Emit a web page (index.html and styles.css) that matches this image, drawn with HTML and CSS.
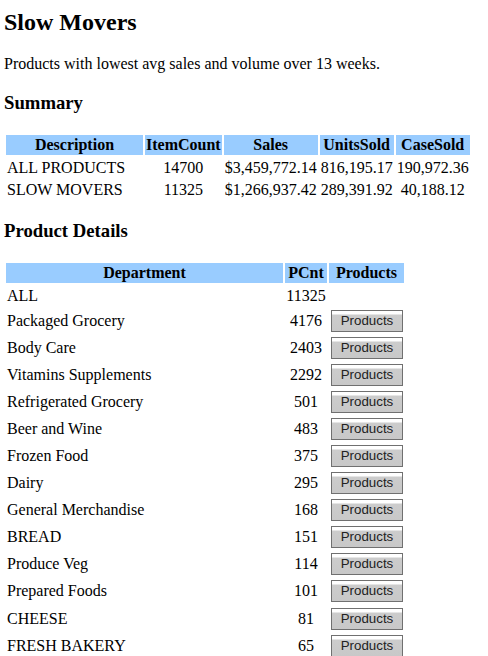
FILE: index.html
```html
<!DOCTYPE html>
<html>
<head>
<meta charset="utf-8">
<title>Slow Movers</title>
<link rel="stylesheet" href="styles.css">
</head>
<body>
<h1 class="title">Slow Movers</h1>
<p class="intro">Products with lowest avg sales and volume over 13 weeks.</p>
<h3 class="section">Summary</h3>
<table class="grid summary">
  <thead>
    <tr>
      <th class="c-desc">Description</th>
      <th class="c-count">ItemCount</th>
      <th class="c-sales">Sales</th>
      <th class="c-units">UnitsSold</th>
      <th class="c-case">CaseSold</th>
    </tr>
  </thead>
  <tbody>
    <tr><td class="left">ALL PRODUCTS</td><td>14700</td><td>$3,459,772.14</td><td>816,195.17</td><td>190,972.36</td></tr>
    <tr><td class="left">SLOW MOVERS</td><td>11325</td><td>$1,266,937.42</td><td>289,391.92</td><td>40,188.12</td></tr>
  </tbody>
</table>
<h3 class="section">Product Details</h3>
<table class="grid details">
  <thead>
    <tr>
      <th class="c-dept">Department</th>
      <th class="c-pcnt">PCnt</th>
      <th class="c-prod">Products</th>
    </tr>
  </thead>
  <tbody>
    <tr class="plain"><td class="left">ALL</td><td>11325</td><td></td></tr>
    <tr class="btnrow"><td class="left">Packaged Grocery</td><td>4176</td><td><button class="pbtn">Products</button></td></tr>
    <tr class="btnrow"><td class="left">Body Care</td><td>2403</td><td><button class="pbtn">Products</button></td></tr>
    <tr class="btnrow"><td class="left">Vitamins Supplements</td><td>2292</td><td><button class="pbtn">Products</button></td></tr>
    <tr class="btnrow"><td class="left">Refrigerated Grocery</td><td>501</td><td><button class="pbtn">Products</button></td></tr>
    <tr class="btnrow"><td class="left">Beer and Wine</td><td>483</td><td><button class="pbtn">Products</button></td></tr>
    <tr class="btnrow"><td class="left">Frozen Food</td><td>375</td><td><button class="pbtn">Products</button></td></tr>
    <tr class="btnrow"><td class="left">Dairy</td><td>295</td><td><button class="pbtn">Products</button></td></tr>
    <tr class="btnrow"><td class="left">General Merchandise</td><td>168</td><td><button class="pbtn">Products</button></td></tr>
    <tr class="btnrow"><td class="left">BREAD</td><td>151</td><td><button class="pbtn">Products</button></td></tr>
    <tr class="btnrow"><td class="left">Produce Veg</td><td>114</td><td><button class="pbtn">Products</button></td></tr>
    <tr class="btnrow"><td class="left">Prepared Foods</td><td>101</td><td><button class="pbtn">Products</button></td></tr>
    <tr class="btnrow"><td class="left">CHEESE</td><td>81</td><td><button class="pbtn">Products</button></td></tr>
    <tr class="btnrow"><td class="left">FRESH BAKERY</td><td>65</td><td><button class="pbtn">Products</button></td></tr>
  </tbody>
</table>
</body>
</html>
```

FILE: styles.css
```css
html, body {
  background: #ffffff;
}
body {
  margin: 0;
  padding: 0 4px;
  font-family: "Liberation Serif", "Times New Roman", serif;
  font-size: 16px;
  color: #000000;
}
.title {
  font-size: 24px;
  font-weight: bold;
  line-height: 28px;
  margin: 8px 0 0 0;
}
.intro {
  margin: 19px 0 0 0;
  line-height: 18px;
}
.section {
  font-size: 18.72px;
  font-weight: bold;
  line-height: 22px;
  margin: 19px 0 0 0;
}
.grid {
  border-collapse: separate;
  border-spacing: 2px;
  margin-top: 19px;
  font-size: 16px;
}
.grid th {
  background: #99ccff;
  font-weight: bold;
  padding: 1px;
  height: 18px;
  line-height: 18px;
  text-align: center;
  white-space: nowrap;
}
.grid td {
  padding: 2px 1px 0 1px;
  height: 18px;
  line-height: 18px;
  text-align: center;
  white-space: nowrap;
  vertical-align: middle;
}
.grid td.left {
  text-align: left;
}
.c-desc { width: 135px; }
.c-count { width: 74px; }
.c-sales { width: 92px; }
.c-units { width: 72px; }
.c-case { width: 72px; }
.c-dept { width: 275px; }
.c-pcnt { width: 40px; }
.c-prod { width: 73px; }
.details tr.btnrow td {
  height: 23.1px;
}
.pbtn {
  display: block;
  box-sizing: border-box;
  width: 72px;
  height: 22px;
  margin: 0 0 0 1px;
  padding: 0;
  border: 1px solid #707070;
  border-radius: 0;
  background: linear-gradient(#ffffff 0, #ffffff 3px, #cccccc 4px, #c8c8c8 100%);
  font-family: "Liberation Sans", Arial, sans-serif;
  font-size: 13.33px;
  line-height: 18px;
  color: #222222;
  text-align: center;
}
```
